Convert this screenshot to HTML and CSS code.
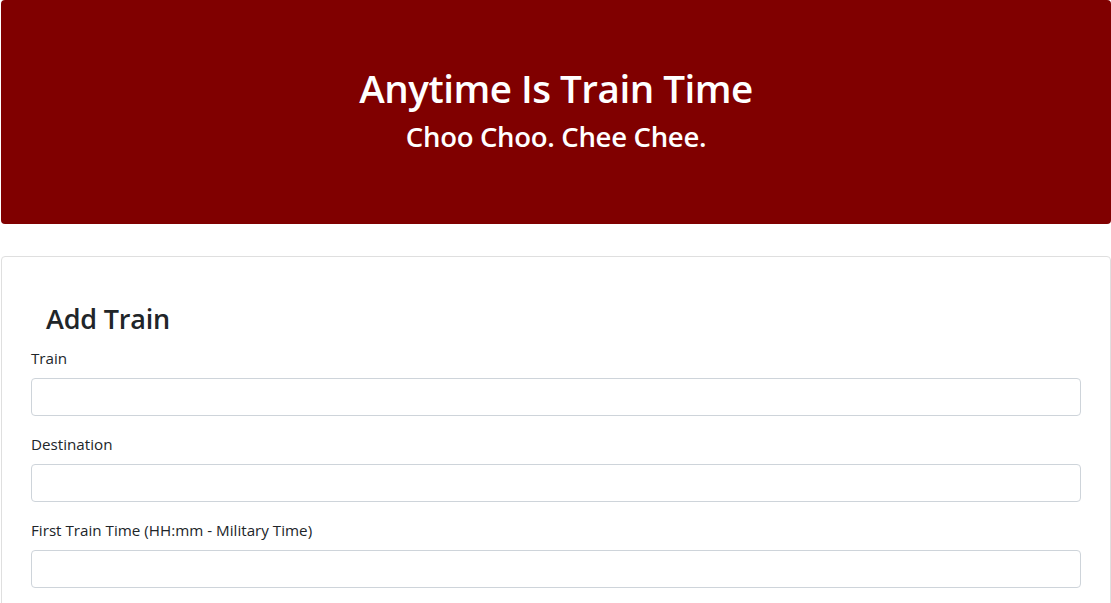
FILE: index.html
```html
<!DOCTYPE html>
<html lang="en">
<head>
<meta charset="utf-8">
<title>Train Time</title>
<link rel="stylesheet" href="styles.css">
</head>
<body>
<div class="page">
  <header class="jumbo">
    <h1 class="jumbo-title">Anytime Is Train Time</h1>
    <h3 class="jumbo-sub">Choo Choo. Chee Chee.</h3>
  </header>
  <section class="card">
    <h2 class="card-title">Add Train</h2>
    <form class="form">
      <div class="form-group">
        <label class="label" for="train">Train</label>
        <input class="input" id="train" type="text">
      </div>
      <div class="form-group">
        <label class="label" for="dest">Destination</label>
        <input class="input" id="dest" type="text">
      </div>
      <div class="form-group">
        <label class="label" for="first">First Train Time (HH:mm - Military Time)</label>
        <input class="input" id="first" type="text">
      </div>
    </form>
  </section>
</div>
</body>
</html>
```
FILE: styles.css
```css
* { box-sizing: border-box; }
html, body { margin: 0; padding: 0; }
body {
  font-family: "Open Sans", "Noto Sans", sans-serif;
  color: #212529;
  background: #fff;
  overflow: hidden;
}
.page {
  padding: 0 0 0 1px;
}
.jumbo {
  background: #800000;
  color: #fff;
  border-radius: 4px;
  height: 224px;
  display: flex;
  flex-direction: column;
  align-items: center;
  padding-top: 65px;
  margin-bottom: 32px;
}
.jumbo-title {
  margin: 0 0 8px;
  font-size: 38.6px;
  font-weight: 600;
  line-height: 47px;
  letter-spacing: -0.5px;
}
.jumbo-sub {
  margin: 0;
  font-size: 27.5px;
  font-weight: 600;
  line-height: 1.2;
  letter-spacing: -0.3px;
}
.card {
  border: 1px solid #dfdfdf;
  border-radius: 4px;
  padding: 43px 29px 40px;
  min-height: 400px;
}
.card-title {
  margin: 0 0 8px 15px;
  font-size: 27px;
  font-weight: 600;
  line-height: 38px;
  letter-spacing: -0.2px;
}
.form-group {
  margin-bottom: 16px;
}
.label {
  display: block;
  font-size: 15.2px;
  line-height: 24px;
  margin-bottom: 8px;
  height: 24px;
}
.input {
  display: block;
  width: 100%;
  height: 38px;
  border: 1px solid #ced4da;
  border-radius: 4px;
  padding: 6px 12px;
  font: inherit;
}
```
